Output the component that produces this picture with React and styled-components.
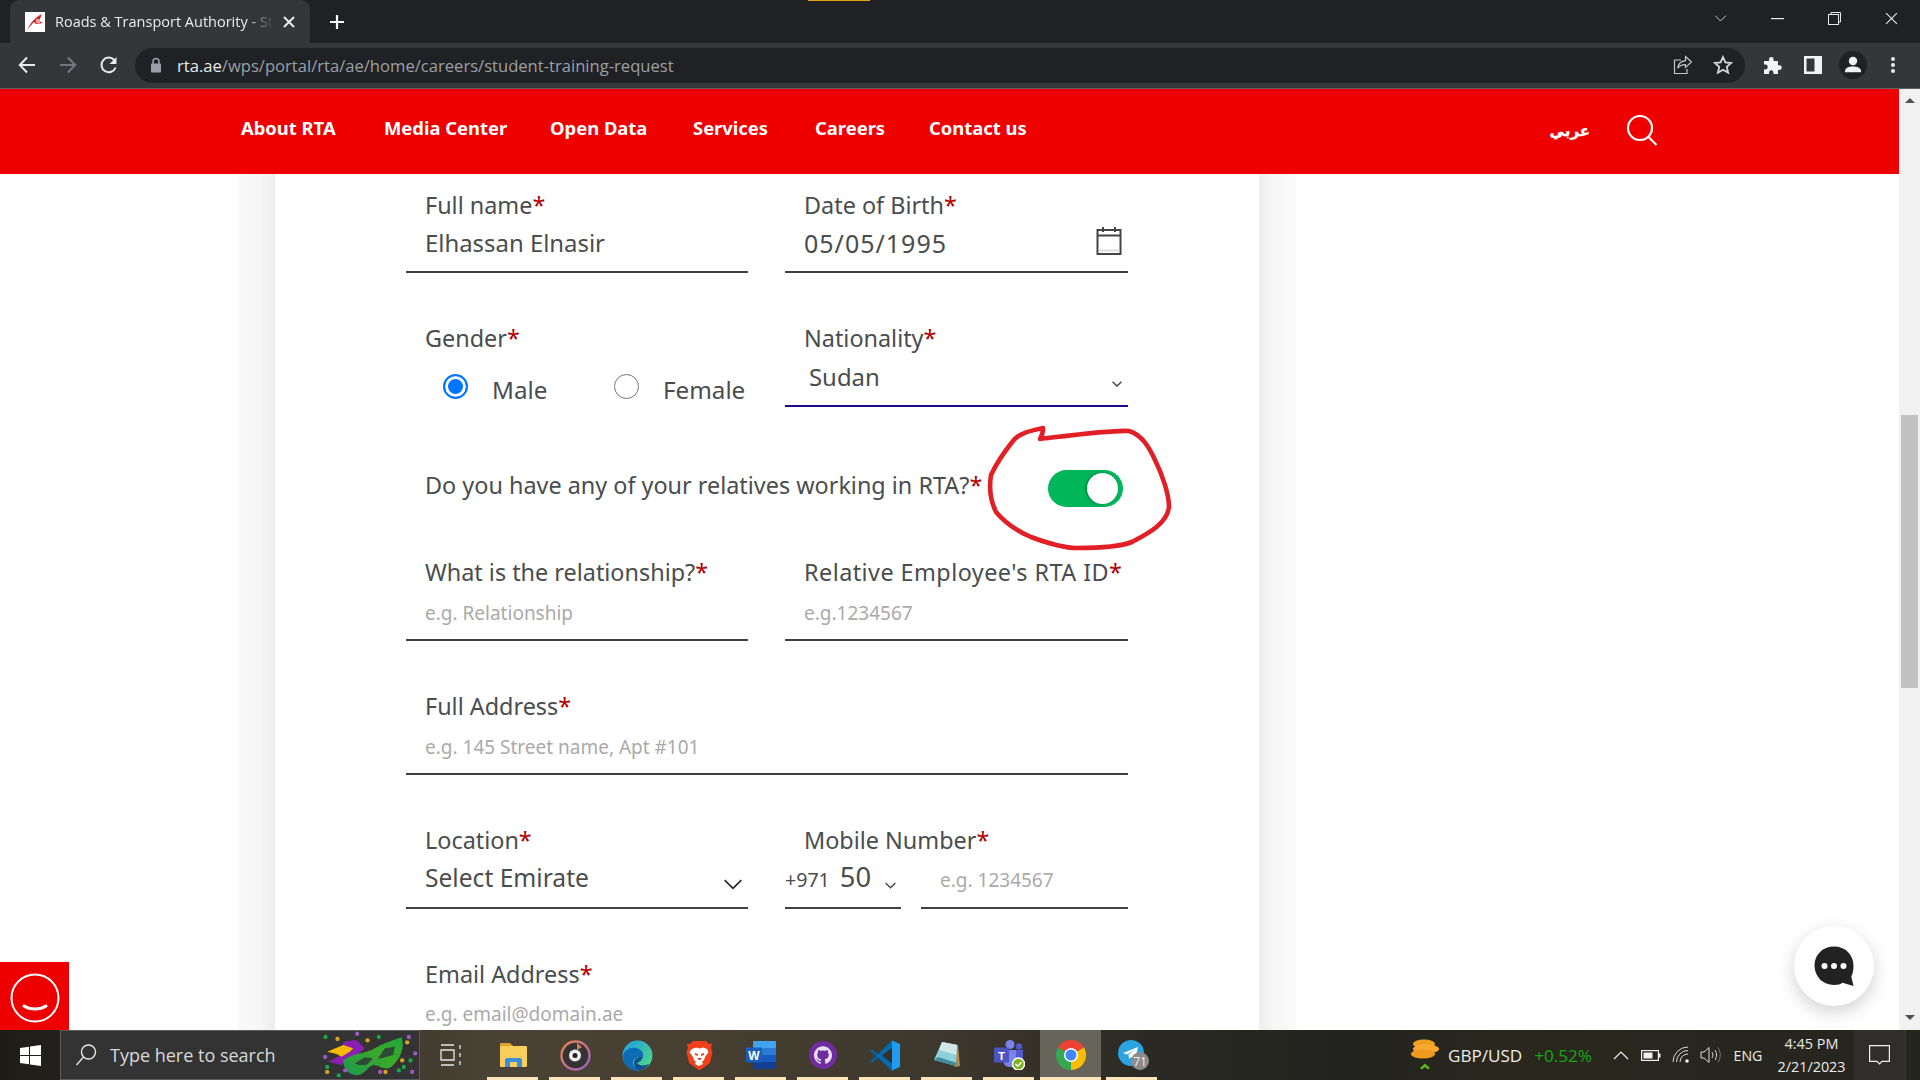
import React from 'react';
import styled, { createGlobalStyle } from 'styled-components';
import { SiGithub } from 'react-icons/si';

const Global = createGlobalStyle`
  html, body { margin: 0; padding: 0; width: 1920px; height: 1080px; overflow: hidden; background: #fff; }
  * { box-sizing: border-box; }
  #root { width: 1920px; height: 1080px; }
`;

const Screen = styled.div`
  position: relative;
  width: 1920px;
  height: 1080px;
  display: flex;
  flex-direction: column;
  overflow: hidden;
  font-family: "Noto Sans", "Open Sans", sans-serif;
`;

/* Browser chrome */
const TabStrip = styled.div`
  position: relative;
  height: 43px;
  background: #202124;
  display: flex;
  align-items: flex-end;
  padding-left: 10px;
`;
const LoadLine = styled.div`
  position: absolute;
  left: 808px;
  top: 0;
  width: 62px;
  height: 1px;
  background: #e8a317;
`;
const Tab = styled.div`
  width: 300px;
  height: 43px;
  background: #35363a;
  border-radius: 9px 9px 0 0;
  display: flex;
  align-items: center;
  padding-left: 15px;
  color: #e8eaed;
`;
const Favicon = styled.div`
  width: 20px;
  height: 20px;
  background: #fff;
  flex: none;
  display: flex;
`;
const TabTitle = styled.div`
  width: 218px;
  margin-left: 10px;
  font: 14.5px "Open Sans", sans-serif;
  white-space: nowrap;
  overflow: hidden;
  -webkit-mask-image: linear-gradient(90deg, #000 88%, transparent 100%);
  mask-image: linear-gradient(90deg, #000 88%, transparent 100%);
`;
const TabClose = styled.div`
  margin-left: 10px;
  display: flex;
`;
const NewTab = styled.div`
  margin: 0 0 0 19px;
  height: 43px;
  display: flex;
  align-items: center;
`;
const StripEnd = styled.div`
  margin-left: auto;
  height: 43px;
  display: flex;
  align-items: center;
`;
const WinButton = styled.div`
  width: ${p => p.$w || 57}px;
  height: 37px;
  display: flex;
  align-items: center;
  justify-content: center;
  margin-top: -6px;
`;

const Toolbar = styled.div`
  height: 46px;
  background: #35363a;
  border-bottom: 1px solid #5f6164;
  display: flex;
  align-items: center;
  padding: 0 0 1px 6px;
`;
const NavBtn = styled.div`
  width: 41px;
  height: 34px;
  display: flex;
  align-items: center;
  justify-content: center;
`;
const Omnibox = styled.div`
  width: 1610px;
  height: 35px;
  margin-left: 6px;
  background: #202124;
  border-radius: 18px;
  display: flex;
  align-items: center;
  padding-left: 15px;
`;
const Url = styled.div`
  margin-left: 15px;
  font: 16.6px "Open Sans", sans-serif;
  color: #9aa0a6;
  white-space: nowrap;
  & b { font-weight: 400; color: #e8eaed; }
`;
const OmniActions = styled.div`
  margin-left: auto;
  padding-right: 2px;
  display: flex;
`;
const ActionBtn = styled.div`
  width: 40px;
  height: 34px;
  display: flex;
  align-items: center;
  justify-content: center;
`;
const ToolActions = styled.div`
  margin-left: 8px;
  display: flex;
`;

/* Page */
const Viewport = styled.div`
  flex: none;
  height: 941px;
  display: flex;
`;
const PageArea = styled.div`
  flex: 1;
  min-width: 0;
  display: flex;
  flex-direction: column;
`;
const SiteNav = styled.nav`
  height: 85px;
  flex: none;
  background: #ef0000;
  display: flex;
  align-items: flex-start;
  padding: 26px 0 0 241px;
  color: #fff;
`;
const NavLink = styled.a`
  width: ${p => p.$w}px;
  font: 700 18.4px/26px "Noto Sans", sans-serif;
  white-space: nowrap;
`;
const Lang = styled.div`
  margin-left: auto;
  font: 700 15px/30px "Noto Sans", "DejaVu Sans", sans-serif;
  -webkit-text-stroke: 0.4px #fff;
`;
const SearchBtn = styled.div`
  width: 38px;
  margin: 0 235px 0 36px;
  display: flex;
`;
const Content = styled.main`
  flex: 1;
  min-height: 0;
  overflow: hidden;
  display: flex;
  padding-left: 238px;
`;
const Gutter = styled.div`
  width: 37px;
  background: linear-gradient(${p => (p.$right ? '270deg' : '90deg')}, #fafafa 0%, #f6f6f6 60%, #ededed 100%);
`;
const Card = styled.form`
  width: 984px;
  background: #fff;
  padding: 14px 0 0 131px;
`;
const Row = styled.div`
  display: grid;
  grid-template-columns: 342px 343px;
  column-gap: 37px;
  width: 722px;
  margin-top: ${p => p.$top || 0}px;
`;
const FullRow = styled.div`
  width: 722px;
  margin-top: ${p => p.$top || 0}px;
`;
const Label = styled.label`
  display: block;
  height: 34px;
  padding-left: 19px;
  font-size: 23.4px;
  line-height: 34px;
  letter-spacing: ${p => p.$ls || 0}px;
  color: #4a4d4e;
  white-space: nowrap;
  & i { font-style: normal; color: #b30000; }
`;
const Control = styled.div`
  height: ${p => p.$h || 52}px;
  border-bottom: 2px solid ${p => p.$line || '#3f4041'};
  padding: ${p => p.$pt ?? 4}px ${p => p.$pr || 0}px 0 ${p => p.$pl ?? 19}px;
  display: flex;
  align-items: flex-start;
  justify-content: space-between;
  font-size: ${p => p.$fs || 23.9}px;
  letter-spacing: ${p => p.$ls || 0}px;
  line-height: 34px;
  color: #4a4d4e;
  white-space: nowrap;
`;
const Placeholder = styled.span`
  font-size: 19px;
  line-height: 30px;
  color: #aaa;
`;
const GenderBox = styled.div`
  height: 52px;
  display: grid;
  grid-template-columns: 49px 122px 49px auto;
  padding: 20px 0 0 37px;
  align-items: start;
  font-size: 24.2px;
  line-height: 29px;
  color: #4a4d4e;
`;
const Radio = styled.span`
  width: 25px;
  height: 25px;
  margin-top: -1px;
  border-radius: 50%;
  border: ${p => (p.$on ? '2px solid #0075ff' : '1.5px solid #767676')};
  background: ${p => (p.$on ? '#0075ff' : '#fff')};
  box-shadow: ${p => (p.$on ? 'inset 0 0 0 3px #fff' : 'none')};
`;
const SwitchRow = styled.div`
  height: 34px;
  margin-top: ${p => p.$top}px;
  padding-left: 19px;
  display: flex;
  align-items: center;
  font-size: 23.4px;
  color: #4a4d4e;
  white-space: nowrap;
  & i { font-style: normal; color: #b30000; }
`;
const Toggle = styled.div`
  width: 75px;
  height: 37px;
  margin: 6px 0 0 66px;
  flex: none;
  border-radius: 19px;
  background: #00b65a;
  display: flex;
  align-items: center;
  justify-content: flex-end;
  padding-right: 5px;
`;
const Knob = styled.div`
  width: 31px;
  height: 31px;
  border-radius: 50%;
  background: #fff;
  box-shadow: -1px 0 3px rgba(0,0,0,.35);
`;
const MobileGrid = styled.div`
  display: grid;
  grid-template-columns: 116px 207px;
  column-gap: 20px;
`;
const Prefix = styled.span`
  font-size: 19.6px;
  line-height: 36px;
`;
const Operator = styled.span`
  margin-left: 10px;
  font-size: 27.4px;
  line-height: 32px;
`;
const IconSlot = styled.span`
  margin: ${p => p.$mt ?? 16}px ${p => p.$mr || 0}px 0 ${p => p.$ml ?? 10}px;
  display: flex;
`;

const Annotation = styled.svg`
  position: absolute;
  left: 982px;
  top: 424px;
  pointer-events: none;
`;
const FloatingHelp = styled.div`
  position: absolute;
  left: 0;
  top: 962px;
  width: 69px;
  height: 68px;
  padding-top: 4px;
  background: #ef0000;
  display: flex;
  align-items: center;
  justify-content: center;
`;
const ChatFab = styled.div`
  position: absolute;
  left: 1794px;
  top: 926px;
  width: 80px;
  height: 80px;
  border-radius: 50%;
  background: #fff;
  box-shadow: 0 6px 18px rgba(0,0,0,.18);
  display: flex;
  align-items: center;
  justify-content: center;
`;

const Scrollbar = styled.div`
  width: 21px;
  background: #f1f1f1;
  flex: none;
  display: flex;
  flex-direction: column;
  align-items: center;
`;
const ScrollArrow = styled.div`
  width: 0;
  height: 0;
  border-left: 5px solid transparent;
  border-right: 5px solid transparent;
  ${p => (p.$down
    ? 'border-top: 5px solid #505050; margin-top: auto; margin-bottom: 10px;'
    : 'border-bottom: 5px solid #505050; margin-top: 9px;')}
`;
const ScrollThumb = styled.div`
  width: 17px;
  height: 273px;
  margin-top: 312px;
  background: #c1c1c1;
`;

/* Taskbar */
const Taskbar = styled.footer`
  height: 50px;
  flex: none;
  display: flex;
  align-items: stretch;
  background: linear-gradient(90deg, #1d1c17 0%, #2c2a23 10%, #4a4335 26%, #453e31 38%, #3c372c 50%, #2a2923 60%, #22231f 70%, #2a271d 78%, #25251f 100%);
  color: #ececec;
  font-family: "Open Sans", sans-serif;
`;
const StartBtn = styled.div`
  width: 60px;
  display: flex;
  align-items: center;
  justify-content: center;
`;
const SearchBox = styled.div`
  width: 360px;
  background: #333;
  border: 1px solid #5c5c5c;
  display: flex;
  align-items: center;
  padding-left: 14px;
  font-size: 18px;
  color: #d8d8d8;
`;
const SearchText = styled.span`
  margin-left: 13px;
  white-space: nowrap;
`;
const Doodle = styled.span`
  margin-left: auto;
  display: flex;
`;
const TaskView = styled.div`
  width: 62px;
  display: flex;
  align-items: center;
  justify-content: center;
`;
const TaskCell = styled.div`
  position: relative;
  width: ${p => p.$w || 62}px;
  flex: none;
  display: flex;
  align-items: center;
  justify-content: center;
  background: ${p => (p.$active ? '#67645a' : 'transparent')};
  &::after {
    content: '';
    position: absolute;
    left: ${p => (p.$active ? 0 : 5)}px;
    right: ${p => (p.$active ? 0 : 6)}px;
    bottom: 0;
    height: 3px;
    background: #fbe5b8;
  }
`;
const TrayGroup = styled.div`
  margin-left: auto;
  display: flex;
  align-items: center;
`;
const Ticker = styled.div`
  display: flex;
  align-items: center;
  font-size: 17.1px;
  white-space: nowrap;
  margin-right: 14px;
`;
const TickerUp = styled.span`
  margin-left: 12px;
  color: #14a814;
`;
const TickerText = styled.span`
  margin-left: 9px;
`;
const TrayIcon = styled.div`
  width: ${p => p.$w}px;
  flex: none;
  display: flex;
  align-items: center;
  justify-content: center;
`;
const TrayLang = styled.div`
  width: 42px;
  margin-left: 3px;
  text-align: center;
  font-size: 14.2px;
`;
const Clock = styled.div`
  width: 85px;
  text-align: center;
  font-size: 14.4px;
  line-height: 23px;
`;
const ActionCenter = styled.div`
  width: 51px;
  align-self: stretch;
  background: #2f2e2a;
  display: flex;
  align-items: center;
  justify-content: center;
`;
const ShowDesktop = styled.div`
  width: 15px;
  align-self: stretch;
  border-left: 1px solid #3c3c36;
`;

/* Icons */
const RtaFav = () => (
  <svg width="20" height="20" viewBox="0 0 20 20"><path d="M2 18 C5 12 9 6 17 2 L14 9 L18 11 L11 12 L9 10 C7 12 4 15 2 18z" fill="#d4202a"/><path d="M11 7h4v4h-4z" fill="#f0a0a0"/></svg>
);
const X = ({ s = 12, c = '#e8eaed', w = 2 }) => (
  <svg width={s} height={s} viewBox="0 0 12 12"><path d="M1 1l10 10M11 1L1 11" stroke={c} strokeWidth={w} fill="none"/></svg>
);
const Plus = () => (
  <svg width="16" height="16" viewBox="0 0 16 16"><path d="M8 1v14M1 8h14" stroke="#fff" strokeWidth="2.2"/></svg>
);
const Back = ({ c = '#e8eaed', flip }) => (
  <svg width="20" height="20" viewBox="0 0 20 20" transform={flip ? 'scale(-1 1)' : undefined}><path d="M18 10H3M10 2.5L2.8 10l7.2 7.5" stroke={c} strokeWidth="2" fill="none"/></svg>
);
const Reload = () => (
  <svg width="20" height="20" viewBox="0 0 20 20"><path d="M16.6 12.5A7.3 7.3 0 1 1 15.2 5" stroke="#e8eaed" strokeWidth="2" fill="none"/><path d="M17.5 2v7h-7z" fill="#e8eaed"/></svg>
);
const Lock = () => (
  <svg width="12" height="16" viewBox="0 0 12 16"><path d="M3 7V4.5a3 3 0 0 1 6 0V7" stroke="#9aa0a6" strokeWidth="1.5" fill="none"/><rect x="1" y="6.5" width="10" height="9" rx="1" fill="#9aa0a6"/></svg>
);
const Share = () => (
  <svg width="20" height="20" viewBox="0 0 20 20" fill="none" stroke="#c4c7ca" strokeWidth="1.2"><path d="M8 5H1.5v13.5H14V14"/><path d="M12.5 1.5l6 5.5-6 5.5V9.6c-3.5 0-6 1-7.7 3.6.4-4 3-7 7.7-7.5z"/></svg>
);
const Star = () => (
  <svg width="20" height="20" viewBox="0 0 20 20"><path d="M10 2l2.4 5.4 5.8.6-4.4 3.9 1.3 5.8L10 14.7l-5.1 3 1.3-5.8L1.8 8l5.8-.6z" fill="none" stroke="#d5d7da" strokeWidth="1.8"/></svg>
);
const Puzzle = () => (
  <svg width="20" height="20" viewBox="0 0 20 20"><path d="M1 6h5V4.2a2.3 2.3 0 0 1 4.6 0V6H15v4.2h1.4a2.4 2.4 0 0 1 0 4.8H15v4H10.4v-1.6a2.2 2.2 0 0 0-4.4 0V19H1v-4.6h1.4a2.4 2.4 0 0 0 0-4.8H1z" fill="#f1f3f4"/></svg>
);
const SidePanel = () => (
  <svg width="18" height="18" viewBox="0 0 18 18"><rect width="18" height="18" fill="#f1f3f4"/><rect x="2.5" y="2.5" width="8" height="13" fill="#35363a"/></svg>
);
const Avatar = () => (
  <svg width="28" height="28" viewBox="0 0 28 28"><circle cx="14" cy="14" r="14" fill="#202124"/><circle cx="14" cy="10" r="4.2" fill="#f1f3f4"/><path d="M6 20c0-3.2 4-4.6 8-4.6s8 1.4 8 4.6v1.2H6z" fill="#f1f3f4"/></svg>
);
const Dots = () => (
  <svg width="6" height="18" viewBox="0 0 6 18"><circle cx="3" cy="3" r="2" fill="#e8eaed"/><circle cx="3" cy="9" r="2" fill="#e8eaed"/><circle cx="3" cy="15" r="2" fill="#e8eaed"/></svg>
);
const Chevron = ({ w = 12, h = 7, c = '#4a4d4e', sw = 1.4 }) => (
  <svg width={w} height={h} viewBox="0 0 12 7"><path d="M.7.7L6 6l5.3-5.3" stroke={c} strokeWidth={sw} fill="none"/></svg>
);
const Calendar = () => (
  <svg width="26" height="29" viewBox="0 0 26 29" fill="none" stroke="#444" strokeWidth="2"><rect x="1.5" y="4" width="23" height="24"/><path d="M1.5 9.5h23M7 1v5M19 1v5"/><path d="M2.5 24.5h21" stroke="#ddd"/></svg>
);
const SearchGlass = () => (
  <svg width="32" height="32" viewBox="0 0 32 32" fill="none" stroke="#fff" strokeWidth="2.2"><circle cx="14" cy="13" r="12"/><path d="M22.5 22l8 8"/></svg>
);
const Scribble = () => (
  <Annotation width="200" height="140" viewBox="0 0 200 140">
    <path d="M61 4 C48 7 37 9 31 17 C23 27 15 38 9 51 C7 64 8 76 14 88 C24 100 35 107 49 113 C65 119 80 124 95 124 C120 124 140 122 150 118 C165 110 185 100 187 83 C187 70 180 50 173 36 C167 23 160 11 147 7 C130 6 100 10 58 15 C60 12 61 8 61 4" fill="none" stroke="#e31f26" strokeWidth="4.6" strokeLinejoin="round" strokeLinecap="round"/>
  </Annotation>
);
const Smile = () => (
  <svg width="50" height="50" viewBox="0 0 50 50" fill="none" stroke="#fff"><circle cx="25" cy="25" r="23.5" strokeWidth="2"/><path d="M14 33c6 4 16 4 22 0" strokeWidth="3" strokeLinecap="round"/></svg>
);
const ChatBubble = () => (
  <svg width="42" height="42" viewBox="0 0 42 42"><path d="M21 1.5C9.8 1.5 1.5 9.5 1.5 20.5S10 40 21 40c4 0 6.5-1 8.5-2.3L40.5 41l-2.2-9.5c1.5-3 2.2-6.5 2.2-11C40.5 9.5 32.2 1.5 21 1.5z" fill="#222"/><circle cx="11.5" cy="21" r="3" fill="#fff"/><circle cx="21" cy="21" r="3" fill="#fff"/><circle cx="30.5" cy="21" r="3" fill="#fff"/></svg>
);
const WinLogo = () => (
  <svg width="21" height="21" viewBox="0 0 21 21" fill="#fff"><path d="M0 3l9-1.3V10H0zM10 1.5L21 0v10H10zM0 11h9v8.3L0 18zM10 11h11v10L10 19.5z"/></svg>
);
const TaskSearch = () => (
  <svg width="22" height="24" viewBox="0 0 22 24" fill="none" stroke="#e6e6e6" strokeWidth="1.4"><circle cx="13.5" cy="9" r="7"/><path d="M8.5 14L1.5 22"/></svg>
);
const maskDots = [[47,21,'#18a64a'],[83,27,'#d4a520'],[142,11,'#9b59c6'],[173,31,'#d4a520'],[207,21,'#18a64a'],[297,21,'#9b59c6'],[292,37,'#d4a520'],[316,70,'#9b59c6'],[302,91,'#18a64a'],[277,91,'#d4a520'],[282,111,'#18a64a'],[267,121,'#18a64a'],[307,126,'#9b59c6'],[227,126,'#d4a520'],[211,126,'#9b59c6'],[106,121,'#9b59c6'],[87,136,'#18a64a'],[52,126,'#d4a520'],[52,111,'#18a64a'],[46,81,'#9b59c6']];
const Mask = () => (
  <svg width="97" height="48" viewBox="37 3 290 144">
    <defs><linearGradient id="mk" x1="0" y1="1" x2="1" y2="0"><stop offset="0" stopColor="#1c9a4e"/><stop offset=".6" stopColor="#3aa82a"/><stop offset="1" stopColor="#1fa83c"/></linearGradient></defs>
    <path d="M55 95L95 75 100 35 140 30 165 55 130 85 95 105z" fill="#8a1fb0"/>
    <path d="M52 65L100 45 130 55 120 65 95 80 80 72z" fill="#f5b900"/>
    <path d="M100 90C130 70 170 70 195 55 220 40 250 30 275 22 285 50 275 85 245 110 225 125 210 105 190 105 170 110 165 140 135 135 110 130 100 110 100 90z" fill="url(#mk)"/>
    <path d="M135 100L165 82 190 85 170 105 145 105zM205 85L225 55 255 50 250 75 215 85z" fill="#2e4a33"/>
    {maskDots.map(([x, y, c], i) => (<circle key={i} cx={x} cy={y} r="6.5" fill={c}/>))}
  </svg>
);
const TaskViewIcon = () => (
  <svg width="22" height="24" viewBox="0 0 22 24" fill="none" stroke="#e6e6e6" strokeWidth="1.3"><path d="M1 2h13M1 22h13M1 7h13v10H1zM20 2v4M20 10v4M20 18v4"/></svg>
);
const Explorer = () => (
  <svg width="28" height="28" viewBox="0 0 28 28">
    <path d="M1 3a1 1 0 0 1 1-1h9l3 3H1z" fill="#e0a32c"/>
    <rect x="1" y="5" width="27" height="21" rx="1" fill="#f7cf5a"/>
    <path d="M6 26V19a2 2 0 0 1 2-2h13a2 2 0 0 1 2 2v7h-5v-5h-7v5z" fill="#3b8fd8"/>
  </svg>
);
const Groove = () => (
  <svg width="31" height="31" viewBox="0 0 31 31">
    <defs><linearGradient id="gr" x1="0" y1="0" x2="1" y2="1"><stop offset="0" stopColor="#e8854a"/><stop offset="1" stopColor="#9a5fc4"/></linearGradient></defs>
    <circle cx="15.5" cy="15.5" r="14" fill="#333" stroke="url(#gr)" strokeWidth="2.4"/>
    <circle cx="15" cy="15.5" r="6" fill="#f0f0f0"/><circle cx="15" cy="15.5" r="2.5" fill="#222"/>
    <path d="M17 3l5 4-5 3z" fill="#d9805a"/>
  </svg>
);
const Edge = () => (
  <svg width="31" height="31" viewBox="0 0 31 31">
    <defs>
      <linearGradient id="eg" x1="0" y1="0" x2="1" y2="1"><stop offset="0" stopColor="#1b9de2"/><stop offset="1" stopColor="#54dd7a"/></linearGradient>
    </defs>
    <circle cx="15.5" cy="15.5" r="15" fill="url(#eg)"/>
    <path d="M1 16c1-6 7-9 13-8 5 1 8 5 7 9-4-1-10 0-10 6 0 3 3 7 8 7.5C9 32 1 26 1 16z" fill="#0f6bb8"/>
    <path d="M12 23c0-5 5-7 9-6-1 3-3 5-6 6 2 3 7 3 12 1-3 5-8 6.5-11 6-3-1-4-4-4-7z" fill="#124f8f"/>
  </svg>
);
const Brave = () => (
  <svg width="27" height="31" viewBox="0 0 27 31">
    <path d="M7 1h13l3 3 3-.5-1 4.5 1.5 4L24 23l-10.500 7.500L3 23 .5 12 2 8 1 3.500 4 4z" fill="#f0401c"/>
    <path d="M6 9l4-1.500 3.500 1 3.500-1L21 9l1.500 3-3.500 5-1 3-2 2 1 2-4.500 2L9 24l1-2-2-2-1-3-3.500-5z" fill="#fff"/>
    <path d="M9 13l3 1v2l-3-1zM18 13l-3 1v2l3-1zM11 18h5l-2.500 2.500z" fill="#f0401c"/>
  </svg>
);
const Word = () => (
  <svg width="30" height="30" viewBox="0 0 30 30">
    <rect x="7" y="1" width="23" height="7" fill="#41a5ee" rx="1"/>
    <rect x="7" y="8" width="23" height="7" fill="#2b7cd3"/>
    <rect x="7" y="15" width="23" height="7" fill="#185abd"/>
    <rect x="7" y="22" width="23" height="7" fill="#103f91" rx="1"/>
    <rect x="0" y="7.5" width="16" height="15" rx="1" fill="#1a5dbb"/>
    <text x="8" y="19.5" textAnchor="middle" fontFamily="Liberation Sans, sans-serif" fontWeight="700" fontSize="12" fill="#fff">W</text>
  </svg>
);
const GithubCircle = () => (
  <svg width="28" height="28" viewBox="0 0 28 28"><circle cx="14" cy="14" r="14" fill="#6e2c9e"/><foreignObject x="5" y="5" width="18" height="18"><SiGithub size={18} color="#e9dff3"/></foreignObject></svg>
);
const VsCode = () => (
  <svg width="30" height="31" viewBox="0 0 30 31">
    <path d="M22 .5L30 4v23l-8 3.500L7 16z" fill="#1f9cf0"/>
    <path d="M22 .5L8 14 2.500 9.500 0 11l6 5-6 5 2.500 1.500L8 18l14 12.500z" fill="#0065a9" opacity=".9"/>
    <path d="M22 7.500L12 15.500l10 8z" fill="#34302a"/>
  </svg>
);
const Notepad = () => (
  <svg width="28" height="28" viewBox="0 0 28 28">
    <path d="M9 1l16 3 2 21-5 1z" fill="#b58b4c"/>
    <path d="M9 1l15 3-1 21L1 19z" fill="#8fd0dc"/>
    <path d="M9 1l15 3-1 10L6 9z" fill="#cfe7ea"/>
    <path d="M1 19l22 6 1-3-19-6z" fill="#3e8c9c"/>
  </svg>
);
const Teams = () => (
  <svg width="31" height="30" viewBox="0 0 31 30">
    <circle cx="16" cy="4.5" r="4.5" fill="#7b83eb"/>
    <circle cx="25" cy="6.5" r="3.2" fill="#5059c9"/>
    <path d="M19 10h10v9c0 3-2 5-5 5h-5z" fill="#5059c9"/>
    <path d="M9 10h13v12a5 5 0 0 1-5 5 7 7 0 0 1-8-6z" fill="#7b83eb"/>
    <rect x="0" y="7.5" width="15" height="15" rx="1" fill="#4b53bc"/>
    <text x="7.5" y="19.5" textAnchor="middle" fontFamily="Liberation Sans, sans-serif" fontWeight="700" fontSize="11.5" fill="#fff">T</text>
    <circle cx="24.5" cy="24" r="6" fill="#7fb21f" stroke="#fff" strokeWidth="1.4"/>
    <path d="M21.5 24l2.2 2.2 3.8-4" stroke="#fff" strokeWidth="1.5" fill="none"/>
  </svg>
);
const ChromeIcon = () => (
  <svg width="30" height="30" viewBox="0 0 30 30">
    <path d="M15 15L2 7.500A15 15 0 0 1 28 7.500z" fill="#ea4335"/>
    <path d="M15 15L28 7.500A15 15 0 0 1 15 30z" fill="#fbbc04"/>
    <path d="M15 15L15 30A15 15 0 0 1 2 7.500z" fill="#34a853"/>
    <circle cx="15" cy="15" r="7" fill="#fff"/><circle cx="15" cy="15" r="5.5" fill="#4285f4"/>
  </svg>
);
const Telegram = () => (
  <IconSlot $mt={0} $ml={3}>
    <svg width="32" height="30" viewBox="0 0 32 30">
      <circle cx="13" cy="13" r="13" fill="#2aa3e0"/>
      <path d="M5 13L20 7l-3 13-4-3-2 2-.5-4.500L18 9l-9 5.500z" fill="#fff"/>
      <circle cx="22" cy="21" r="9" fill="#8b8b8b"/>
      <text x="22" y="25.5" textAnchor="middle" fontFamily="Open Sans, sans-serif" fontSize="12" fill="#f2f2f2">71</text>
    </svg>
  </IconSlot>
);
const Coins = () => (
  <svg width="28" height="32" viewBox="0 0 28 32">
    <ellipse cx="13" cy="5" rx="11" ry="4.5" fill="#f0a020"/>
    <ellipse cx="15" cy="10" rx="13" ry="4.5" fill="#f8a830"/>
    <ellipse cx="12" cy="15" rx="12" ry="4.5" fill="#ee9a1c"/>
    <path d="M9 29l5-4.500 5 4.500-2 1.500-3-2.500-3 2.500z" fill="#5fb320"/>
  </svg>
);
const Caret = () => (
  <svg width="16" height="10" viewBox="0 0 16 10"><path d="M1 9l7-7 7 7" stroke="#eee" strokeWidth="1.2" fill="none"/></svg>
);
const Battery = () => (
  <svg width="20" height="11" viewBox="0 0 20 11"><rect x=".6" y=".6" width="16.8" height="9.8" fill="none" stroke="#eee" strokeWidth="1.2"/><rect x="2.5" y="2.5" width="9" height="6" fill="#eee"/><rect x="18" y="3.5" width="1.5" height="4" fill="#eee"/></svg>
);
const Wifi = () => (
  <svg width="18" height="18" viewBox="0 0 18 18" fill="none" stroke="#ddd" strokeWidth="1"><path d="M1 16A15 15 0 0 1 16 1M4.500 16A11.500 11.500 0 0 1 16 4.500M8 16a8 8 0 0 1 8-8"/><circle cx="15" cy="15" r="1.8" fill="#eee" stroke="none"/></svg>
);
const Speaker = () => (
  <svg width="21" height="18" viewBox="0 0 21 18" fill="none" stroke="#ddd" strokeWidth="1"><path d="M1 6h3l5-4.500v15L4 12H1zM12 6c1.300 2 1.300 4 0 6M15 4c2 3 2 7 0 10"/><path d="M18 1.500c3 5 3 10 0 15" stroke="#777"/></svg>
);
const Bubble = () => (
  <svg width="21" height="20" viewBox="0 0 21 20" fill="none" stroke="#eee" strokeWidth="1.2"><path d="M.6.6h19.800v15.800h-7.400l-2.500 2.500-2.500-2.500H.6z"/></svg>
);

const Req = () => <i>*</i>;

export default function App() {
  const taskIcons = [Explorer, Groove, Edge, Brave, Word, GithubCircle, VsCode, Notepad, Teams];
  return (
    <Screen>
      <Global />
      <TabStrip>
        <LoadLine />
        <Tab>
          <Favicon><RtaFav /></Favicon>
          <TabTitle>Roads &amp; Transport Authority - Student Training Request</TabTitle>
          <TabClose><X /></TabClose>
        </Tab>
        <NewTab><Plus /></NewTab>
        <StripEnd>
          <WinButton $w={58}><Chevron w={13} h={7} c="#c8c8c8" sw={1} /></WinButton>
          <WinButton><svg width="13" height="2"><rect width="13" height="1.2" fill="#e8eaed" /></svg></WinButton>
          <WinButton><svg width="13" height="13" viewBox="0 0 13 13" fill="none" stroke="#e8eaed" strokeWidth="1"><rect x=".5" y="2.5" width="10" height="10" /><path d="M3 2.500V.5h9.500V10h-2" /></svg></WinButton>
          <WinButton><X s={13} w={1} /></WinButton>
        </StripEnd>
      </TabStrip>
      <Toolbar>
        <NavBtn><Back /></NavBtn>
        <NavBtn><Back c="#75787c" flip /></NavBtn>
        <NavBtn><Reload /></NavBtn>
        <Omnibox>
          <Lock />
          <Url><b>rta.ae</b>/wps/portal/rta/ae/home/careers/student-training-request</Url>
          <OmniActions>
            <ActionBtn><Share /></ActionBtn>
            <ActionBtn><Star /></ActionBtn>
          </OmniActions>
        </Omnibox>
        <ToolActions>
          <ActionBtn><Puzzle /></ActionBtn>
          <ActionBtn><SidePanel /></ActionBtn>
          <ActionBtn><Avatar /></ActionBtn>
          <ActionBtn><Dots /></ActionBtn>
        </ToolActions>
      </Toolbar>

      <Viewport>
        <PageArea>
          <SiteNav>
            <NavLink $w={143}>About RTA</NavLink>
            <NavLink $w={166}>Media Center</NavLink>
            <NavLink $w={143}>Open Data</NavLink>
            <NavLink $w={122}>Services</NavLink>
            <NavLink $w={114}>Careers</NavLink>
            <NavLink $w={100}>Contact us</NavLink>
            <Lang>عربي</Lang>
            <SearchBtn><SearchGlass /></SearchBtn>
          </SiteNav>
          <Content>
            <Gutter />
            <Card>
              <Row>
                <div>
                  <Label>Full name<Req /></Label>
                  <Control $h={51}>Elhassan Elnasir</Control>
                </div>
                <div>
                  <Label>Date of Birth<Req /></Label>
                  <Control $h={51} $pr={6} $fs={25} $ls={1}>05/05/1995<IconSlot $mt={0} $ml={1}><Calendar /></IconSlot></Control>
                </div>
              </Row>
              <Row $top={48}>
                <div>
                  <Label>Gender<Req /></Label>
                  <GenderBox>
                    <Radio $on />
                    <span>Male</span>
                    <Radio />
                    <span>Female</span>
                  </GenderBox>
                </div>
                <div>
                  <Label>Nationality<Req /></Label>
                  <Control $line="#1a0d8c" $pl={24} $pr={6} $pt={5}>Sudan<IconSlot $mt={21}><Chevron w={10} h={6} sw={1.8} /></IconSlot></Control>
                </div>
              </Row>
              <SwitchRow $top={61}>
                Do you have any of your relatives working in RTA?<Req />
                <Toggle><Knob /></Toggle>
              </SwitchRow>
              <Row $top={53}>
                <div>
                  <Label>What is the relationship?<Req /></Label>
                  <Control $pt={9}><Placeholder>e.g. Relationship</Placeholder></Control>
                </div>
                <div>
                  <Label $ls={0.45}>Relative Employee's RTA ID<Req /></Label>
                  <Control $pt={9}><Placeholder>e.g.1234567</Placeholder></Control>
                </div>
              </Row>
              <FullRow $top={48}>
                <Label>Full Address<Req /></Label>
                <Control $pt={9}><Placeholder>e.g. 145 Street name, Apt #101</Placeholder></Control>
              </FullRow>
              <Row $top={48}>
                <div>
                  <Label>Location<Req /></Label>
                  <Control $pr={5} $pt={4} $fs={24.6}>Select Emirate<IconSlot $mt={18}><Chevron w={20} h={11} c="#222" sw={1} /></IconSlot></Control>
                </div>
                <div>
                  <Label>Mobile Number<Req /></Label>
                  <MobileGrid>
                    <Control $pl={0} $pt={4} $pr={5}>
                      <span><Prefix>+971</Prefix><Operator>50</Operator></span>
                      <IconSlot $mt={21} $ml={0}><Chevron w={11} h={7} sw={1.6} /></IconSlot>
                    </Control>
                    <Control $pt={8}><Placeholder>e.g. 1234567</Placeholder></Control>
                  </MobileGrid>
                </div>
              </Row>
              <FullRow $top={48}>
                <Label>Email Address<Req /></Label>
                <Control $pt={8}><Placeholder>e.g. email@domain.ae</Placeholder></Control>
              </FullRow>
            </Card>
            <Gutter $right />
          </Content>
        </PageArea>
        <Scrollbar>
          <ScrollArrow />
          <ScrollThumb />
          <ScrollArrow $down />
        </Scrollbar>
      </Viewport>

      <Taskbar>
        <StartBtn><WinLogo /></StartBtn>
        <SearchBox>
          <TaskSearch />
          <SearchText>Type here to search</SearchText>
          <Doodle><Mask /></Doodle>
        </SearchBox>
        <TaskView><TaskViewIcon /></TaskView>
        {taskIcons.map((Icon, i) => (
          <TaskCell key={i}><Icon /></TaskCell>
        ))}
        <TaskCell $active $w={61}><ChromeIcon /></TaskCell>
        <TaskCell><Telegram /></TaskCell>
        <TrayGroup>
          <Ticker>
            <Coins />
            <TickerText>GBP/USD</TickerText>
            <TickerUp>+0.52%</TickerUp>
          </Ticker>
          <TrayIcon $w={30}><Caret /></TrayIcon>
          <TrayIcon $w={30}><Battery /></TrayIcon>
          <TrayIcon $w={30}><Wifi /></TrayIcon>
          <TrayIcon $w={28}><Speaker /></TrayIcon>
          <TrayLang>ENG</TrayLang>
          <Clock>4:45 PM<br />2/21/2023</Clock>
          <ActionCenter><Bubble /></ActionCenter>
          <ShowDesktop />
        </TrayGroup>
      </Taskbar>

      <Scribble />
      <FloatingHelp><Smile /></FloatingHelp>
      <ChatFab><ChatBubble /></ChatFab>
    </Screen>
  );
}
